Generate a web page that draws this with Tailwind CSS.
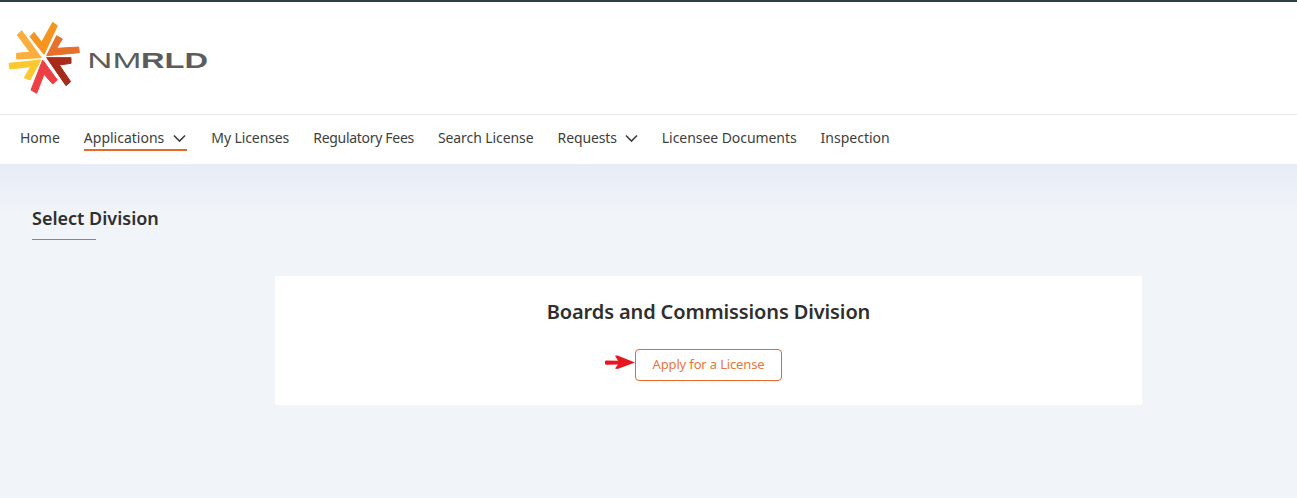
<!DOCTYPE html>
<html lang="en">
<head>
<meta charset="utf-8">
<title>NMRLD</title>
<script src="https://cdn.jsdelivr.net/npm/@tailwindcss/browser@4"></script>
</head>
<body class="h-[498px] overflow-hidden bg-[#f1f4f9] font-['Noto_Sans',sans-serif] text-[#3e3e3c]">
<header class="bg-white border-t-2 border-[#2c3e46]">
  <div class="h-[113px] border-b border-[#e8e8e8] flex items-start pt-[13px]">
    <svg class="w-[210px] h-[85px]" viewBox="0 0 630 255" role="img" aria-label="NMRLD" stroke-width="3" stroke-linejoin="round">
      <polygon fill="#fbae3c" stroke="#fbae3c" points="124,128 50,132 50,115 90,112 52,60 65,47"/>
      <polygon fill="#f7941e" stroke="#f7941e" points="158,22 172,32 132,118 90,65 102,52 125,82"/>
      <polygon fill="#e8702a" stroke="#e8702a" points="140,122 170,62 187,72 170,100 236,96 238,113"/>
      <polygon fill="#a82a1a" stroke="#a82a1a" points="140,128 213,128 213,145 178,150 212,200 198,212"/>
      <polygon fill="#ee3f45" stroke="#ee3f45" points="128,135 172,195 158,207 132,178 110,235 93,225"/>
      <polygon fill="#fdc82f" stroke="#fdc82f" points="122,135 90,195 73,188 92,155 30,162 27,145"/>
      <text x="262" y="159" textLength="162" lengthAdjust="spacingAndGlyphs" font-family="Liberation Sans" font-size="66" stroke="none" fill="#5c5c5c">NM</text>
      <text x="423" y="159" textLength="201" lengthAdjust="spacingAndGlyphs" font-family="Liberation Sans" font-weight="700" font-size="66" stroke="none" fill="#5c5c5c">RLD</text>
    </svg>
  </div>
  <nav class="h-[49px] flex items-center pl-[20px] pb-[3px] gap-[24px] text-[14px]">
    <a class="leading-[20px]">Home</a>
    <a class="relative flex items-center gap-[9px] leading-[20px] pr-px before:absolute before:left-0 before:right-0 before:top-[21px] before:h-[2px] before:bg-[#e5692a]">Applications
      <svg class="w-[13px] h-[14px]" viewBox="0 0 13 14" fill="none" stroke="#3e3e3c" stroke-width="1.6"><path d="M1 4.500 6.500 10 12 4.500"/></svg>
    </a>
    <a class="leading-[20px] tracking-[-0.1px]">My Licenses</a>
    <a class="leading-[20px] tracking-[-0.3px]">Regulatory Fees</a>
    <a class="leading-[20px] tracking-[-0.08px]">Search License</a>
    <a class="flex items-center gap-[8px] leading-[20px]"><span class="tracking-[-0.12px]">Requests</span>
      <svg class="w-[13px] h-[14px]" viewBox="0 0 13 14" fill="none" stroke="#3e3e3c" stroke-width="1.6"><path d="M1 4.500 6.500 10 12 4.500"/></svg>
    </a>
    <a class="leading-[20px] tracking-[-0.06px]">Licensee Documents</a>
    <a class="leading-[20px]">Inspection</a>
  </nav>
</header>
<main class="bg-gradient-to-b from-[#e8ecf6] to-[#f1f4f9] bg-no-repeat bg-[length:100%_50px] px-[32px] pt-[42px]">
  <div class="w-[64px] border-b border-[#e5692a] pb-[9px] whitespace-nowrap h-[34px]">
    <h1 class="text-[18px] leading-[24px] font-semibold text-[#2f2f2d]">Select Division</h1>
  </div>
  <section class="ml-[243px] mt-[36px] w-[867px] h-[129px] bg-white flex flex-col items-center pt-[23px]">
    <h2 class="text-[20px] leading-[26px] font-semibold tracking-[-0.13px] text-[#2f2f2d]">Boards and Commissions Division</h2>
    <div class="relative mt-[24px]">
      <svg class="absolute left-[-30px] top-[6px] w-[30px] h-[15px]" viewBox="0 0 30 15" fill="#e8171f"><path d="M1.500 5.500 13 5.800 10 .8 12.500.5 30 7.500 12.500 14 10 13.500 13 9.500 1.500 9.700A2 2 0 0 1 1.500 5.500z"/></svg>
      <button class="block w-[147px] h-[32px] rounded-[4px] border border-[#e5692a] bg-white text-[13px] tracking-[-0.15px] text-[#e8763a]">Apply for a License</button>
    </div>
  </section>
</main>
</body>
</html>
